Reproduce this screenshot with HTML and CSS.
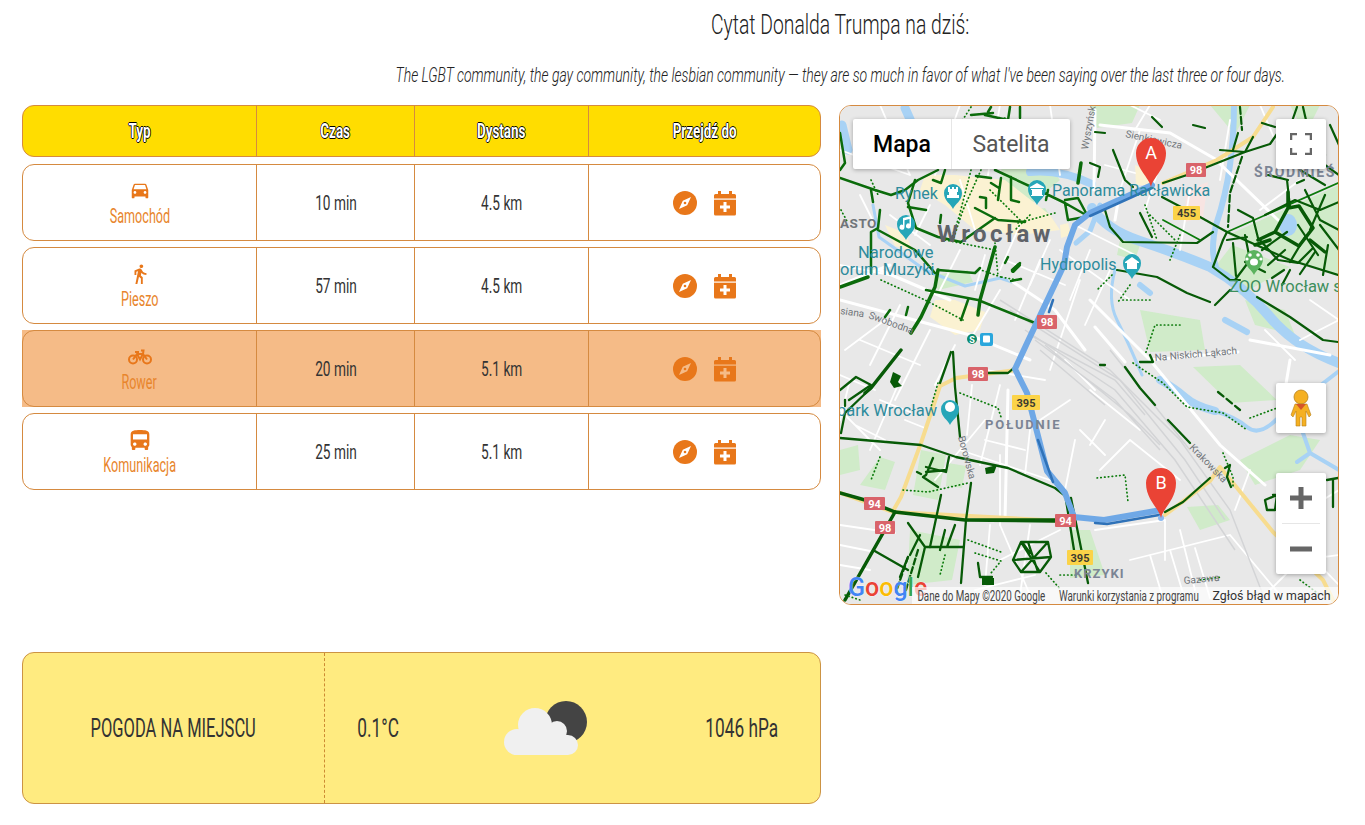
FILE: index.html
```html
<!DOCTYPE html>
<html lang="pl">
<head>
    <meta charset="UTF-8">
    <meta name="viewport" content="width=device-width, initial-scale=1.0">
    <title>Dojazd</title>
    <link rel="stylesheet" href="styles.css">
</head>
<body>
    <svg class="defs" width="0" height="0">
        <symbol id="i-compass" viewBox="0 0 24 24"><circle cx="12" cy="12" r="12"/><path class="hole" d="M18 6l-3.800 8.200-4.400-4.400zM6 18l3.800-8.200 4.400 4.400z"/><circle cx="12" cy="12" r="1.300"/></symbol>
        <symbol id="i-cal" viewBox="0 0 24 26"><path d="M5 1h3v3h8V1h3v3h2.500A1.500 1.500 0 0 1 23 5.500V24a1.500 1.500 0 0 1-1.500 1.500h-19A1.500 1.500 0 0 1 1 24V5.500A1.500 1.500 0 0 1 2.500 4H5z"/><rect class="hole" x="1" y="8.500" width="22" height="1.200"/><path class="hole" d="M10.500 12h3v3.500H17v3h-3.500V22h-3v-3.500H7v-3h3.500z"/></symbol>
    </svg>

    <div class="quote">
        <h2 class="quote-title"><span class="cond">Cytat Donalda Trumpa na dziś:</span></h2>
        <p class="quote-text"><span class="cond">The LGBT community, the gay community, the lesbian community — they are so much in favor of what I've been saying over the last three or four days.</span></p>
    </div>

    <div class="main">
        <div class="left">
            <div class="routes">
                <div class="row head">
                    <div class="cell"><span class="cond">Typ</span></div>
                    <div class="cell"><span class="cond">Czas</span></div>
                    <div class="cell"><span class="cond">Dystans</span></div>
                    <div class="cell"><span class="cond">Przejdź do</span></div>
                </div>
                <div class="row">
                    <div class="cell type">
                        <svg class="ico" width="24" height="22" viewBox="0 1 24 24"><path d="M18.920 6.010C18.720 5.420 18.160 5 17.500 5h-11c-.66 0-1.210.42-1.420 1.010L3 12v8c0 .55.45 1 1 1h1c.55 0 1-.45 1-1v-1h12v1c0 .55.45 1 1 1h1c.55 0 1-.45 1-1v-8l-2.080-5.990zM6.500 16c-.83 0-1.500-.67-1.500-1.500S5.670 13 6.500 13s1.500.67 1.500 1.500S7.330 16 6.500 16zm11 0c-.83 0-1.500-.67-1.500-1.500s.67-1.500 1.500-1.500 1.500.67 1.500 1.500-.67 1.500-1.500 1.500zM5 11l1.500-4.500h11L19 11H5z"/></svg>
                        <span class="cond">Samochód</span>
                    </div>
                    <div class="cell"><span class="cond">10 min</span></div>
                    <div class="cell"><span class="cond">4.5 km</span></div>
                    <div class="cell links">
                        <svg class="ico" width="24" height="24"><use href="#i-compass"/></svg>
                        <svg class="ico" width="24" height="26"><use href="#i-cal"/></svg>
                    </div>
                </div>
                <div class="row">
                    <div class="cell type">
                        <svg class="ico" width="22" height="22" viewBox="0 0 24 24"><path d="M13.500 5.500c1.100 0 2-.9 2-2s-.9-2-2-2-2 .9-2 2 .9 2 2 2zM9.800 8.900L7 23h2.100l1.800-8 2.100 2v6h2v-7.500l-2.100-2 .6-3C14.800 12 16.800 13 19 13v-2c-1.900 0-3.500-1-4.300-2.400l-1-1.600c-.4-.6-1-1-1.700-1-.3 0-.5.1-.8.1L6 8.300V13h2V9.600l1.800-.7"/></svg>
                        <span class="cond">Pieszo</span>
                    </div>
                    <div class="cell"><span class="cond">57 min</span></div>
                    <div class="cell"><span class="cond">4.5 km</span></div>
                    <div class="cell links">
                        <svg class="ico" width="24" height="24"><use href="#i-compass"/></svg>
                        <svg class="ico" width="24" height="26"><use href="#i-cal"/></svg>
                    </div>
                </div>
                <div class="row active">
                    <div class="cell type">
                        <svg class="ico" width="24" height="22" viewBox="0 -3 24 22"><g fill="none" stroke="#e8771a" stroke-width="2"><circle cx="5" cy="10.500" r="4"/><circle cx="19" cy="10.500" r="4"/><path d="M5 10.500L9 5h6l4 5.500M9 5l3 5.500L15 5M13 1.500h2.500L15 5M7 3h4"/></g></svg>
                        <span class="cond">Rower</span>
                    </div>
                    <div class="cell"><span class="cond">20 min</span></div>
                    <div class="cell"><span class="cond">5.1 km</span></div>
                    <div class="cell links">
                        <svg class="ico" width="24" height="24"><use href="#i-compass"/></svg>
                        <svg class="ico" width="24" height="26"><use href="#i-cal"/></svg>
                    </div>
                </div>
                <div class="row">
                    <div class="cell type">
                        <svg class="ico" width="28" height="22" viewBox="0 1 24 21" preserveAspectRatio="none"><path d="M4 16c0 .88.39 1.670 1 2.220V20c0 .55.45 1 1 1h1c.55 0 1-.45 1-1v-1h8v1c0 .55.45 1 1 1h1c.55 0 1-.45 1-1v-1.780c.61-.55 1-1.340 1-2.220V6c0-3.500-3.580-4-8-4s-8 .5-8 4v10zm3.500 1c-.83 0-1.500-.67-1.500-1.500S6.670 14 7.500 14s1.500.67 1.500 1.500S8.330 17 7.500 17zm9 0c-.83 0-1.500-.67-1.500-1.500s.67-1.500 1.500-1.500 1.500.67 1.500 1.500-.67 1.500-1.500 1.500zm1.500-6H6V6h12v5z"/></svg>
                        <span class="cond">Komunikacja</span>
                    </div>
                    <div class="cell"><span class="cond">25 min</span></div>
                    <div class="cell"><span class="cond">5.1 km</span></div>
                    <div class="cell links">
                        <svg class="ico" width="24" height="24"><use href="#i-compass"/></svg>
                        <svg class="ico" width="24" height="26"><use href="#i-cal"/></svg>
                    </div>
                </div>
            </div>

            <div class="weather">
                <div class="weather-title"><span class="cond">POGODA NA MIEJSCU</span></div>
                <div class="weather-data">
                    <span class="fit w-temp"><span class="cond">0.1°C</span></span>
                    <svg class="cloud" width="84" height="56" viewBox="504 700 84 56">
                        <circle cx="566" cy="722" r="21" fill="#444"/>
                        <g fill="#f0f0f0">
                            <circle cx="535" cy="725" r="17"/>
                            <circle cx="517" cy="742" r="13"/>
                            <circle cx="557" cy="731" r="10"/>
                            <circle cx="568" cy="745" r="10"/>
                            <rect x="517" y="735" width="51" height="20"/>
                        </g>
                    </svg>
                    <span class="fit w-press"><span class="cond">1046 hPa</span></span>
                </div>
            </div>
        </div>

        <div class="map">
            <svg class="map-canvas" width="500" height="500" viewBox="839 105 500 500">
                <rect x="839" y="105" width="500" height="500" fill="#e8e8e8"/>

                <!-- tereny zielone -->
                <g fill="#d0ebc9">
                    <path d="M1228 235l111-50v90l-49-15zM1232 245l58 22-50 28-25-28z"/>
                    <path d="M1090 105h50l-8 18-35 5zM1210 105h40l-15 30zM1290 105h30l-15 30z"/>
                    <path d="M1193 367l47-2 37 35-47 3zM1240 460l50-25 30 5-20 30-45 15z"/>
                    <path d="M1140 310l60 10 5 30-55 2z"/>
                    <path d="M1187 507l31-2 12 15-30 10z"/>
                    <path d="M1000 160l40-5 20 25-30 25-25-10zM1015 213l30-5 10 15-30 10z"/>
                    <path d="M933 275l35-5 5 12-35 8z"/>
                    <path d="M840 450l18-5 2 25-20 5zM860 485l20-28 15 5-10 28zM921 450l25 5-8 45-25-5zM948 463l18 3-4 22-16-2z"/>
                    <path d="M910 530l50 10-8 40-45 5zM1070 530l20 0 15 45-35 3z"/>
                    <path d="M1120 240l20 5-5 15-18-5zM1245 300l40 10 10 25-40-10z"/>
                </g>

                <!-- stare miasto i inne plamy -->
                <g fill="#fbf2d2">
                    <path d="M925 175l30 0 50 5 45 35 10 15-40 5-45-5-30-25-25-15z"/>
                    <path d="M885 225l20 8 8 18-18-5z"/>
                    <path d="M935 300l20 0 30 12-5 18-25 5-25-18z"/>
                    <path d="M1135 165l12 5 3 15-14 0z"/>
                    <path d="M1060 225l8-2 3 12-10 3z"/>
                </g>
                <path d="M1186 190l22-8-5 35-18 5z" fill="#f8e4e2"/>

                <!-- woda -->
                <g fill="none" stroke="#a8d2f5" stroke-linecap="round" stroke-linejoin="round">
                    <path stroke-width="10" d="M1092 208q14 22 48 33t70 26q35 20 60 50t69 46"/>
                    <path stroke-width="6" d="M1234 105q0 30-4 60t-14 60q-6 25 0 42"/>
                    <path stroke-width="8" d="M1030 172q30-3 62 12"/>
                    <path stroke-width="9" d="M842 125l6 25M905 108l8 18"/>
                    <path stroke-width="3" d="M873 205l6 32 46 33 40 16 35-8 12 4"/>
                    <path stroke-width="8" d="M1160 380q15 8 25 17t30 14"/>
                    <path stroke-width="4" d="M1215 411q20 6 32 16t30-8l62-48"/>
                    <path stroke-width="4" d="M1303 433l7 20 29 17M1297 462l13-9"/>
                    <path stroke-width="3" d="M1115 270q-8 30 2 50t25 55"/>
                    <path stroke-width="5" d="M1100 205l-10 26-14 12"/>
                    <path stroke-width="6" d="M1225 320l22 12M1140 285l10 8"/>
                </g>
                <ellipse cx="1288" cy="225" rx="9" ry="11" fill="#a8d2f5"/>

                <!-- ulice -->
                <g fill="none" stroke="#fff" stroke-width="1.800" stroke-linecap="round">
                    <path stroke-width="3" d="M1100 125l70 8 47 27M1095 110l-1 80M1216 160l62 60M1120 190l-5 30"/>
                    <path d="M840 150l70 25M880 105l30 70M960 105l-25 70M1000 105l-12 70M1050 105l10 70M1140 130l-20 60M1165 150l-20 60M1190 190l-10 60M1230 120l-10 60M1300 180l-40 30M1130 105l30 15M1150 105l-15 25M1260 105l15 35M1105 165l30 8"/>
                    <path d="M860 195l15 30M890 215l40 30M930 205l-15 30M960 180l15 50M1020 225l-20 45M1050 240l-20 45M960 250l-20 40M985 255l-10 35M1005 260l60 25"/>
                    <path stroke-width="3" d="M840 300l130 35 60 25M840 285l50-20M880 270l70 30M1010 280l45 30 30 40"/>
                    <path d="M840 265l50 10M860 340l60 25M845 350l40-30M900 305l-30 60M930 330l-35 70M955 345l-20 40M1000 290l-30 50M1040 260l-25 60M1080 280l-30 90M1075 225l60 30M1060 250l70 50M1090 250l-20 50M1110 270l-25 55"/>
                    <path stroke-width="3" d="M1090 300l60 60 70 85 45 40M1150 360l88-8M1250 340l80 15M1290 360l-10 60M1125 362l-30-35"/>
                    <path d="M840 375l35 15M840 410l40 40M850 380l-10 40M900 380l-30 70M1000 385l-20 80M985 420l-50 60M960 450l90 30M1000 455l0 70M1030 430l-5 45M985 370l60 10M1075 440l-10 50M1100 470l30-30M1130 440l50 40M1090 390l50 40M880 400l30 12M855 425l30 15M905 420l20 8M972 385l-5 50M985 440l40 10M1040 420l30-20M1065 360l30 30M1080 430l25 25M1105 420l-15 25"/>
                    <path d="M840 525l55 8M840 545l30 6M840 565l30 5M1000 525l30 70M1030 525l-10 70M1095 530l70-10M1165 520l0 40M1180 530l15 60M1130 560l100-25 50 60M1150 555l15 50M1170 550l15 50M1195 548l15 50M1000 560l60-30M990 525l-5 60M975 590l60-15"/>
                    <path d="M1235 510l15-40M1290 520l49-30M1270 590l30-30 39-5M1310 555l29 30M1300 340l39-20M1310 300l29 20M1265 330l30 30"/>
                    <path stroke-width="3" d="M1008 390l-3 130"/>
                </g>

                <!-- tory -->
                <g fill="none" stroke="#d3d4d6" stroke-width="1.500">
                    <path d="M1000 300l110 70 70 70 50 70 35 90"/>
                    <path d="M1010 310l110 70 65 80 40 60"/>
                    <path d="M1025 330l90 60 60 70 60 90"/>
                    <path d="M1035 340l80 60 45 50M1040 350l65 55M1110 350l40 50 40 50M1030 335l85 45 30 35M1045 345l85 70 30 30"/>
                </g>

                <!-- ulice glowne -->
                <g fill="none" stroke="#f7dc8f" stroke-width="4" stroke-linecap="round" stroke-linejoin="round">
                    <path d="M1016 370l-60 8-16 8-19 57-20 54-8 14M840 493l53 19 170 9M1273 107l-20 30-36 23-54 23M1165 515l45-34 10-14 53 65 50 48 10 20"/>
                </g>

                <!-- sciezki rowerowe, stare miasto -->
                <g fill="none" stroke="#0b6b0b" stroke-width="2.500" stroke-linecap="round" stroke-linejoin="round">
                    <path d="M840 178l35 12 16 5 14-5 13-10 20-10M871 190l2 12M840 133l5 30-5 7M880 210l-2 18-7 4v41M878 230l37 20 20 23"/>
                    <path d="M938 270l37 3 5-5M926 290l52 10 57 23M968 300l-7 20M890 310l-5 7M908 307l-2 8M908 207l18 3"/>
                    <path stroke-width="3.500" d="M995 247l-15 53-2 15M938 270l-3 17-14 30-10 16M840 287l28-10M1078 183l3-20"/>
                    <path d="M916 228l22 9 23 5 34-24M975 208l23 12 27 2M941 215l-1 8M915 180l-7 23 8 25M945 170l-4 13-8-3"/>
                    <path d="M980 197l6 1v10M1001 178l-3 22M976 176l15 2M991 183l8 5M1011 177v23l8 2M995 170l43 20 27 13 21 12M1048 190l-2 10M1065 203l3 17 17-3M1065 200l13-2 8 15"/>
                    <path d="M1008 257l-3 6M1020 263l-8 7M1011 281l10-2M985 115l23 5 2-13M1020 107v11M971 115l22-2M991 107l-3 5"/>
                    <path stroke-width="4" d="M1019 265l-6 6"/>
                </g>

                <!-- sciezki, wschod -->
                <g fill="none" stroke="#075a07" stroke-width="2.200" stroke-linecap="round" stroke-linejoin="round">
                    <path d="M1152 117l10 10M1193 125l12 3M1095 132l10 1M1113 150l12 30 8 7M1090 163l10 4-2 10M1163 183l24-8 58-23M1220 150l25 2 8-15M1238 133l-5 17"/>
                    <path stroke-dasharray="7 3" d="M1240 107l2 23M1242 157l-12 36-2 34"/>
                    <path d="M1162 197l38 20 27 15 63 28 48 15M1105 210l5 17 13 15 74 1 16-11M1140 213l12 24M1117 270l40 7 30 16 23 9M1230 290l-15 15M1257 297l33 20 33 23 15 2"/>
                    <path stroke="#0b7a0b" stroke-width="1.800" d="M1163 220l37 20M1227 232l111-49"/>
                    <path d="M1213 267l10-27 4-8M1213 267l17 13 10 0M1233 243l3 33M1227 240l20-3M1245 235l5 25M1250 260l-15 20"/>
                    <path d="M1245 152l25-8 7-10 12-4M1297 107l-7 20M1303 107l3 13M1262 123l13 4M1290 130l35 25M1330 125l9 20"/>
                    <path d="M1287 180l3 27M1297 183l7-3M1268 175l20 5M1300 170l25 15M1325 165l14 10M1265 215l30-15 25 10 19-8M1305 190l15 30 19 10M1325 195l-15 35M1320 225l19 25M1298 225l20 30M1262 250l25-18M1268 265l17-15M1290 262l15-25"/>
                    <path stroke-width="3.500" d="M1288 208l-13 24 24 14 14-18-14-22zM1288 192l0 16M1275 232l-17 8M1310 240l15 12M1270 240l-15 5"/>
                    <path d="M1253 218l5 20 20 22 20 3 15-15M1238 210l15 8M1245 262l20 10M1315 252l-15 22M1328 245l-5 30M1272 278l12-8M1282 285l8-15"/>
                </g>

                <!-- poludnie -->
                <g fill="none" stroke="#075a07" stroke-width="2.300" stroke-linecap="round" stroke-linejoin="round">
                    <path stroke-width="3.500" d="M901 350l-30 38-6 5M895 512l-50 88"/>
                    <path d="M840 390l16-13 15 8-22 15M871 388l-26 25-4 20M845 400v6M840 438l81 7 35 12 52 11 47 20 13 10M951 352l-11 31M953 352l2 35 5 50"/>
                    <path d="M933 458l-7 17-3 2 15 10M949 457l-3 15-20-5M926 472l20-2M917 472l4 2M971 483l-5 37-5 63M941 495l-11 52"/>
                    <path stroke-width="3.500" d="M840 493l25 7 30 12 70 8 90 1M965 520h90"/>
                    <path d="M873 550l35 20M908 523l17 24h38M920 535l-10 20M908 557l-8 20M925 547l-7 30M945 530l-5 20M955 525l-8 22"/>
                    <path stroke-dasharray="6 3" d="M908 557l-12 35M918 550l-12 40"/>
                    <path d="M1021 542h27l3 15-11 15h-19l-8-12zM1021 542l19 30M1048 542l-27 30M1013 560l38-3M1028 542l10 30M1030 553l-8-11M978 563l2 14h12"/>
                    <path d="M988 373h20l7-6"/>
                    <path d="M1071 498l17 85M1066 500l8 50"/>
                    <path d="M1125 367l15 21 15 17M1168 420l22 23M1140 362h13l-3-7M1210 478l-27 24-18 10M1225 468l5-3-3 12 4 10M1265 500l12-5-2 15h-8zM1327 480l11-2M1333 480v27M1277 495h-4M1105 365h-5"/>
                    <path stroke-dasharray="7 4" d="M1218 392l22 18"/>
                </g>
                <path d="M985 468l12-3-3 8-8 1z" fill="#075a07"/>
                <path d="M893 372l8 4-3 6 4 4-8 2-4-6zM982 578h12v7h-12z" fill="#075a07"/>

                <!-- kropkowane -->
                <g fill="none" stroke="#0b7a0b" stroke-width="1.700" stroke-linecap="round" stroke-dasharray="0.500 3.300">
                    <path d="M981 170l-18 40-10 30M971 170l-12 47-8 23M971 107l-13 20M871 180l8 17M841 210l7 13M881 280l44 20 38 20M1055 213l-37 10M1001 277l-20-7M995 243l3 33M1017 280l-16-3M1005 118l-15 5M990 190l30 30M1030 215l-15 15M945 240l50 10"/>
                    <path d="M1145 205l12 35M1150 215l25 25M1180 235l-10 25M1130 285l-12 17M1150 300l-30 0M1180 325l-25 0-10 30M1112 275l-15 15"/>
                    <path d="M1133 363l30 20 24 24 36 6 24 17M1250 418l27-10M1223 453l10 24v11M1097 478l28-3 3 27M1200 580l22-3M1284 500l-7 10M1300 580l20 15M1290 565l15 5"/>
                    <path d="M880 457l-9 23M960 393l38 15 3 9M903 490l25 2 40-9M968 540l33 12M975 553l26 8-10 12M938 383l-7 24"/>
                    <path d="M1046 573l15 17M1060 575h18M945 555l-5 20"/>
                    <path d="M845 595l15 5"/>
                </g>

                <!-- trasa -->
                <g fill="none" stroke-linecap="round" stroke-linejoin="round">
                    <path stroke="#6fa8e6" stroke-width="6" d="M1152 185l-62 28-15 12-8 22-3 18-18 38-18 38-13 28 12 24 20 78 18 22 9 24 30 3 57-10"/>
                    <path stroke="#2f72b8" stroke-width="2.500" d="M1152 188l-62 28M1095 523l12 1 52-9M1038 440l15 42M1053 300l-4 12"/>
                </g>

                <!-- etykiety -->
                <g font-family="Roboto, sans-serif">
                    <g fill="#2d8b9c">
                        <text x="895" y="199" font-size="16">Rynek</text>
                        <text x="858" y="258" font-size="16.500">Narodowe</text>
                        <text x="840" y="275" font-size="16.500">orum Muzyki</text>
                        <text x="1052" y="196" font-size="16">Panorama Racławicka</text>
                        <text x="1040" y="270" font-size="16">Hydropolis</text>
                        <text x="837" y="416" font-size="16.500">park Wrocław</text>
                    </g>
                    <text x="1229" y="292" fill="#3d8f5c" font-size="16.500">ZOO Wrocław s</text>
                    <text x="840" y="228" fill="#70757a" font-size="13.500" font-weight="700" letter-spacing=".5">ASTO</text>
                    <text x="937" y="242" fill="#5f6368" font-size="24" font-weight="700" letter-spacing="3.400">Wrocław</text>
                    <text x="1254" y="177" fill="#7b8494" font-size="14" font-weight="700" letter-spacing="1.600">ŚRÓDMIEŚ</text>
                    <text x="985" y="429" fill="#7b8494" font-size="13" font-weight="700" letter-spacing="1.800">POŁUDNIE</text>
                    <text x="1074" y="578" fill="#7b8494" font-size="13" font-weight="700" letter-spacing="1">KRZYKI</text>
                    <g fill="#70757a" font-size="10">
                        <text transform="translate(958 437) rotate(75)">Borowska</text>
                        <text transform="translate(1189 448) rotate(46)">Krakowska</text>
                        <text transform="translate(1155 361) rotate(-5)">Na Niskich Łąkach</text>
                        <text transform="translate(1184 584) rotate(-5)">Gazowa</text>
                        <text transform="translate(868 318) rotate(20)">Swobodna</text>
                        <text transform="translate(840 314) rotate(8)">siana</text>
                        <text transform="translate(1125 137) rotate(12)">Sienkiewicza</text>
                        <text transform="translate(1088 150) rotate(-80)">Wyszyńskiego</text>
                    </g>
                </g>

                <!-- oznaczenia drog -->
                <g font-family="Roboto, sans-serif" font-size="11" font-weight="700" text-anchor="middle">
                    <g fill="#d9636a">
                        <rect x="1037" y="315" width="20" height="14" rx="1"/>
                        <rect x="968" y="367" width="20" height="14" rx="1"/>
                        <rect x="1186" y="163" width="20" height="14" rx="1"/>
                        <rect x="864" y="497" width="21" height="13" rx="1"/>
                        <rect x="875" y="521" width="20" height="13" rx="1"/>
                        <rect x="1055" y="514" width="21" height="13" rx="1"/>
                    </g>
                    <g fill="#fff">
                        <text x="1047" y="326">98</text>
                        <text x="978" y="378">98</text>
                        <text x="1196" y="174">98</text>
                        <text x="874.500" y="508">94</text>
                        <text x="885" y="532">98</text>
                        <text x="1065.500" y="525">94</text>
                    </g>
                    <g fill="#fbd348">
                        <rect x="1173" y="206" width="27" height="14" rx="1"/>
                        <rect x="1012" y="395" width="28" height="15" rx="1"/>
                        <rect x="1067" y="550" width="26" height="15" rx="1"/>
                    </g>
                    <g fill="#3c3c30">
                        <text x="1186.500" y="217">455</text>
                        <text x="1026" y="407">395</text>
                        <text x="1080" y="562">395</text>
                    </g>
                </g>

                <!-- pinezki -->
                <g fill="#26a6b8">
                    <path d="M953 209c-2-5-9-8-9-16a9 9 0 0 1 18 0c0 8-7 11-9 16z"/>
                    <path d="M906 240c-2-5-9-8-9-16a9 9 0 0 1 18 0c0 8-7 11-9 16z"/>
                    <path d="M1037 205c-2-5-9-8-9-16a9 9 0 0 1 18 0c0 8-7 11-9 16z"/>
                    <path d="M1132 279c-2-5-9-8-9-16a9 9 0 0 1 18 0c0 8-7 11-9 16z"/>
                    <path d="M950 425c-2-5-9-8-9-16a9 9 0 0 1 18 0c0 8-7 11-9 16z"/>
                </g>
                <path d="M1254 275c-2-5-9-8-9-16a9 9 0 0 1 18 0c0 8-7 11-9 16z" fill="#5bb35f"/>
                <g fill="#fff">
                    <path d="M948 187h2v2h2v-2h2v2h2v-2h2v5h-1v3h2v3h-12v-3h2v-3h-1z"/>
                    <path d="M903 218l8-2v10a2.500 2.500 0 1 1-1.500-2.300V219l-5 1.200v7a2.500 2.500 0 1 1-1.500-2.300z"/>
                    <path d="M1037 183l7 4v1h-14v-1zM1031 189h12v1h-1v5h1v1h-12v-1h1v-5h-1z"/>
                    <path d="M1132 257l7 5v1h-2v6h-10v-6h-2v-1z"/>
                    <circle cx="950" cy="407" r="5"/>
                    <circle cx="1250" cy="255" r="1.800"/><circle cx="1258" cy="255" r="1.800"/><circle cx="1247" cy="259" r="1.600"/><circle cx="1261" cy="259" r="1.600"/>
                    <ellipse cx="1254" cy="262" rx="4" ry="3.500"/>
                </g>
                <circle cx="972" cy="339" r="5" fill="#0c8a6e"/>
                <text x="972" y="342.500" fill="#fff" font-family="Roboto, sans-serif" font-size="9" font-weight="700" text-anchor="middle">S</text>
                <rect x="980" y="333" width="13" height="13" rx="2" fill="#2aa6dc"/>
                <rect x="983" y="335.500" width="7" height="7" rx="1" fill="#fff"/>

                <!-- markery A i B -->
                <g font-family="Roboto, sans-serif" font-size="18" text-anchor="middle">
                    <path d="M1151 187c-2-10-15-18-15-34a15 15 0 0 1 30 0c0 16-13 24-15 34z" fill="#ea4335"/>
                    <text x="1151" y="159" fill="#fff">A</text>
                    <circle cx="1161" cy="518" r="3" fill="#8ab8f0"/>
                    <path d="M1161 518c-2-10-15-18-15-35a15 15 0 0 1 30 0c0 17-13 25-15 35z" fill="#ea4335"/>
                    <text x="1161" y="489" fill="#fff">B</text>
                </g>

                <!-- logo -->
                <text x="848" y="596" font-family="Roboto, sans-serif" font-size="25" font-weight="500" stroke="#fff" stroke-width=".6" paint-order="stroke"><tspan fill="#4285f4">G</tspan><tspan fill="#ea4335">o</tspan><tspan fill="#fbbc05">o</tspan><tspan fill="#4285f4">g</tspan><tspan fill="#34a853">l</tspan><tspan fill="#ea4335">e</tspan></text>
            </svg>

            <div class="map-types">
                <div class="map-type on">Mapa</div>
                <div class="map-type">Satelita</div>
            </div>
            <div class="map-btn fullscreen">
                <svg width="22" height="22" viewBox="0 0 22 22"><path d="M1 7V1h6M15 1h6v6M21 15v6h-6M7 21H1v-6" fill="none" stroke="#666" stroke-width="2.500"/></svg>
            </div>
            <div class="map-btn pegman">
                <svg width="22" height="38" viewBox="0 0 22 38"><circle cx="11" cy="8" r="7" fill="#f5b022" stroke="#b5801c" stroke-width=".8"/><path d="M5 15h12l4 11-2 2-3-6v15h-4V28h-2v9H6V22l-3 6-2-2z" fill="#f5b022" stroke="#b5801c" stroke-width=".6"/><path d="M6 15l5 6 5-6z" fill="#d5552a"/></svg>
            </div>
            <div class="map-zoom">
                <div class="zoom-btn"><svg width="22" height="22" viewBox="0 0 22 22"><path d="M11 0v22M0 11h22" stroke="#666" stroke-width="5"/></svg></div>
                <div class="zoom-sep"></div>
                <div class="zoom-btn"><svg width="22" height="22" viewBox="0 0 22 22"><path d="M0 11h22" stroke="#666" stroke-width="5"/></svg></div>
            </div>
            <div class="map-foot">
                <span class="fit w-data"><span class="cond">Dane do Mapy ©2020 Google</span></span>
                <span class="fit w-terms"><span class="cond">Warunki korzystania z programu</span></span>
                <span class="fit w-report">Zgłoś błąd w mapach</span>
            </div>
        </div>
    </div>
</body>
</html>
```

FILE: styles.css
```css
* {
    box-sizing: border-box;
}

body {
    margin: 0;
    background: #fff;
    color: #333;
    font-family: Roboto, sans-serif;
    font-weight: 400;
}

.defs {
    position: absolute;
}

/* Roboto sciesniony, bo nie ma waskiego kroju */
.cond {
    display: inline-block;
    white-space: nowrap;
    transform: scaleX(var(--sx, 0.65));
}

.fit {
    display: flex;
    justify-content: center;
    white-space: nowrap;
}

.quote {
    margin-left: 315px;
}

.quote-title,
.quote-text {
    display: flex;
    justify-content: center;
    margin: 0;
    color: #222;
    font-weight: 300;
}

.quote-title {
    padding-top: 10px;
    font-size: 28px;
    line-height: 30px;
    --sx: 0.69;
}

.quote-text {
    padding-top: 23px;
    font-size: 20px;
    line-height: 24px;
    font-style: italic;
    --sx: 0.7;
}

.main {
    display: flex;
    align-items: flex-start;
    gap: 18px;
    margin: 18px 0 0 22px;
}

.left {
    width: 799px;
}

.routes {
    display: flex;
    flex-direction: column;
    gap: 6px;
    height: 385px;
}

.row {
    position: relative;
    display: grid;
    grid-template-columns: 233px 158px 174px auto;
    height: 77px;
    border: 1px solid #d58a40;
    border-radius: 12px;
    font-size: 21px;
    --hole: #fff;
}

.row.head {
    height: 52px;
    margin-bottom: 1px;
    background: #ffdd00;
    color: #fff;
    font-size: 20px;
    font-weight: 700;
    text-shadow: 1px 0 0 #000, -1px 0 0 #000, 0 1px 0 #000, 0 -1px 0 #000;
    --sx: 0.67;
}

/* tlo wiersza jest prostokatne, ramka zaokraglona */
.row.active {
    background: #f5bb87;
    border-color: transparent;
    border-radius: 0;
    --hole: #f5bb87;
}

.row.active::after {
    content: "";
    position: absolute;
    inset: -1px;
    border: 1px solid #d58a40;
    border-radius: 12px;
}

.cell {
    display: flex;
    flex-direction: column;
    align-items: center;
    justify-content: center;
    border-left: 1px solid #d58a40;
}

.cell:first-child {
    border-left: 0;
}

.type {
    gap: 2px;
    padding-top: 2px;
    color: #e8852c;
    font-size: 20px;
    line-height: 24px;
    --sx: 0.63;
}

.ico {
    fill: #e8771a;
}

.hole {
    fill: var(--hole);
}

.links {
    flex-direction: row;
    gap: 16px;
}

.weather {
    display: flex;
    height: 152px;
    margin-top: 162px;
    background: #ffeb80;
    border: 1px solid #cc9344;
    border-radius: 12px;
    font-size: 25px;
    --sx: 0.69;
}

.weather-title {
    display: flex;
    align-items: center;
    justify-content: center;
    width: 302px;
    border-right: 1px dashed #cc8a33;
    --sx: 0.66;
}

.weather-data {
    display: flex;
    flex: 1;
    align-items: center;
    justify-content: space-between;
    padding: 0 40px 0 32px;
}

.w-temp {
    width: 43px;
}

.w-press {
    width: 76px;
}

.cloud {
    margin-right: 12px;
}

.map {
    position: relative;
    width: 500px;
    height: 500px;
    border: 1px solid #d58a40;
    border-radius: 12px;
    overflow: hidden;
}

.map-canvas {
    display: block;
    margin: -1px;
}

.map-types {
    position: absolute;
    top: 13px;
    left: 13px;
    display: flex;
    height: 50px;
    background: #fff;
    border-radius: 2px;
    box-shadow: 0 1px 4px rgba(0, 0, 0, 0.3);
    font-size: 23px;
}

.map-type {
    display: flex;
    align-items: center;
    justify-content: center;
    width: 119px;
    color: #565656;
}

.map-type + .map-type {
    border-left: 1px solid #e6e6e6;
}

.map-type.on {
    width: 98px;
    font-weight: 500;
    color: #000;
}

.map-btn,
.map-zoom {
    position: absolute;
    left: 436px;
    width: 50px;
    background: #fff;
    border-radius: 2px;
    box-shadow: 0 1px 4px rgba(0, 0, 0, 0.3);
}

.map-btn {
    display: flex;
    align-items: center;
    justify-content: center;
    height: 50px;
}

.fullscreen {
    top: 13px;
}

.pegman {
    top: 277px;
}

.map-zoom {
    top: 367px;
    height: 101px;
}

.zoom-btn {
    display: flex;
    align-items: center;
    justify-content: center;
    height: 50px;
}

.zoom-sep {
    height: 1px;
    margin: 0 6px;
    background: #e6e6e6;
}

.map-foot {
    position: absolute;
    right: 0;
    bottom: 0;
    display: flex;
    align-items: center;
    gap: 15px;
    height: 17px;
    padding: 0 7px 0 4px;
    background: rgba(255, 255, 255, 0.7);
    font-size: 14px;
    color: #444;
    --sx: 0.7;
}

.w-data {
    width: 130px;
}

.w-terms {
    width: 136px;
}

.w-report {
    width: 119px;
    font-size: 12.400px;
    color: #333;
}
```
